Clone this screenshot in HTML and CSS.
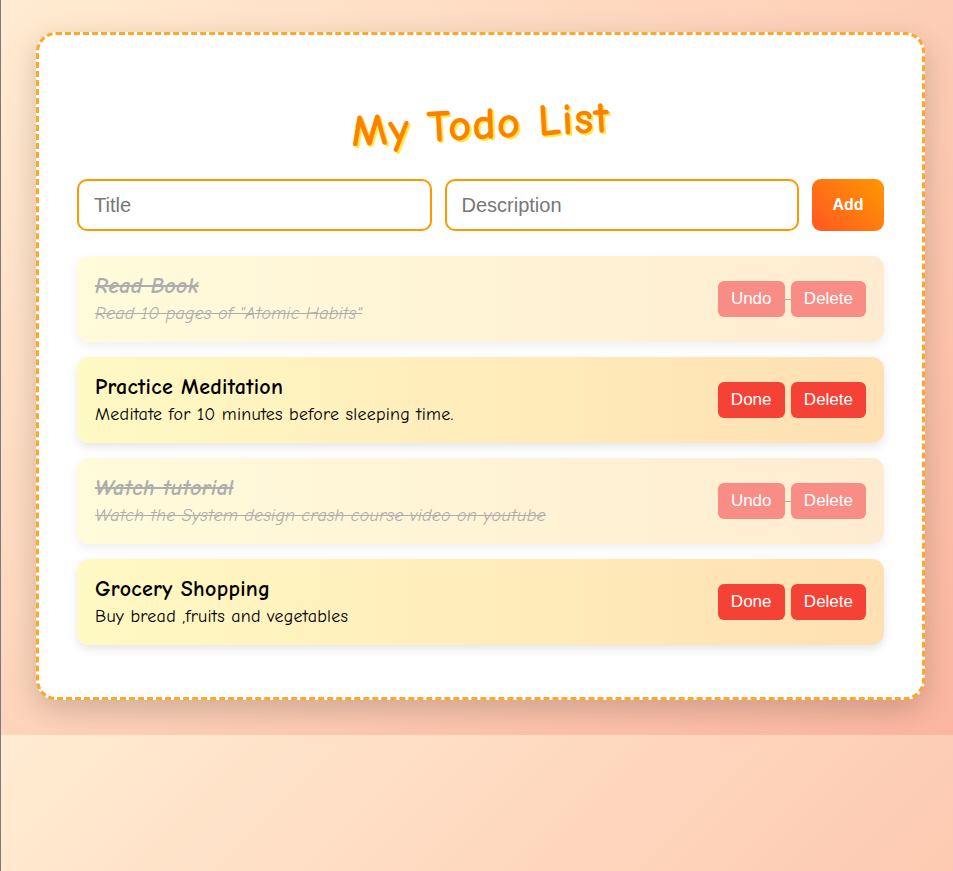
FILE: index.html
```html
<!DOCTYPE html>
<html lang="en">
<head>
<meta charset="utf-8">
<title>My Todo List</title>
<link rel="stylesheet" href="styles.css">
</head>
<body>
<div class="edge"></div>
<div class="app">
  <h1 class="heading">My Todo List</h1>
  <form class="add-row">
    <input class="field" type="text" placeholder="Title">
    <input class="field" type="text" placeholder="Description">
    <button class="add-btn" type="button">Add</button>
  </form>
  <div class="list">
    <div class="todo done">
      <div class="todo-text">
        <div class="todo-title">Read Book</div>
        <div class="todo-desc">Read 10 pages of "Atomic Habits"</div>
      </div>
      <div class="todo-actions"><button class="btn">Undo</button> <button class="btn">Delete</button></div>
    </div>
    <div class="todo">
      <div class="todo-text">
        <div class="todo-title">Practice Meditation</div>
        <div class="todo-desc">Meditate for 10 minutes before sleeping time.</div>
      </div>
      <div class="todo-actions"><button class="btn">Done</button> <button class="btn">Delete</button></div>
    </div>
    <div class="todo done">
      <div class="todo-text">
        <div class="todo-title">Watch tutorial</div>
        <div class="todo-desc">Watch the System design crash course video on youtube</div>
      </div>
      <div class="todo-actions"><button class="btn">Undo</button> <button class="btn">Delete</button></div>
    </div>
    <div class="todo">
      <div class="todo-text">
        <div class="todo-title">Grocery Shopping</div>
        <div class="todo-desc">Buy bread ,fruits and vegetables</div>
      </div>
      <div class="todo-actions"><button class="btn">Done</button> <button class="btn">Delete</button></div>
    </div>
  </div>
</div>
</body>
</html>
```
FILE: styles.css
```css
* { box-sizing: border-box; }

body {
  margin: 0;
  padding: 32px 0 35px 8px;
  background: linear-gradient(135deg, #ffecd2 0%, #fcb69f 100%);
  font-family: "Comic Sans MS", "Comic Neue", cursive;
}

.edge {
  position: fixed;
  left: 0;
  top: 0;
  bottom: 0;
  width: 1px;
  background: #7a7a7a;
}

.app {
  max-width: 889px;
  margin: 0 auto;
  background: #fff;
  border: 3px dashed #ffa726;
  border-radius: 20px;
  padding: 38px 38px 52px;
  box-shadow: 0 10px 30px rgba(0, 0, 0, 0.18);
}

.heading {
  margin: 26px 0 30px;
  text-align: center;
  font-size: 45px;
  line-height: 50px;
  letter-spacing: 1px;
  font-weight: bold;
  color: #fb8200;
  text-shadow: 2px 2px 0 #ffe93b;
  transform: rotate(-3.2deg);
}

.add-row {
  display: flex;
  gap: 13px;
  height: 52px;
  margin: 0 0 25px;
}

.field {
  flex: 1;
  min-width: 0;
  height: 52px;
  border: 2px solid #ff9800;
  border-radius: 10px;
  padding: 0 15px;
  font-family: "Liberation Sans", Arial, sans-serif;
  font-size: 20px;
  color: #333;
  background: #fff;
  outline: none;
}

.field::placeholder { color: #777; }

.add-btn {
  width: 72px;
  height: 52px;
  border: none;
  border-radius: 9px;
  background: linear-gradient(45deg, #ff5722, #ff9800);
  color: #fff;
  font-family: "Liberation Sans", Arial, sans-serif;
  font-weight: bold;
  font-size: 16px;
}

.list {
  display: flex;
  flex-direction: column;
  gap: 15px;
}

.todo {
  display: flex;
  align-items: center;
  justify-content: space-between;
  height: 86px;
  padding: 0 18px;
  border-radius: 12px;
  background: linear-gradient(90deg, #fff9c4, #ffe0b2);
  box-shadow: 0 4px 10px rgba(0, 0, 0, 0.1);
}

.todo-title {
  font-size: 22px;
  letter-spacing: 0.3px;
  font-weight: bold;
  line-height: 28px;
  color: #000;
}

.todo-desc {
  margin-top: 2px;
  font-size: 18px;
  letter-spacing: 0.25px;
  line-height: 24px;
  color: #000;
}

.todo.done {
  opacity: 0.6;
  text-decoration: line-through;
  font-style: italic;
  color: #777;
}

.todo.done .todo-title,
.todo.done .todo-desc { color: #777; }

.todo-actions {
  white-space: nowrap;
  font-size: 16px;
  word-spacing: 1px;
}

.btn {
  display: inline-block;
  height: 36px;
  padding: 0 13px;
  border: none;
  border-radius: 6px;
  background: #f44336;
  color: #fff;
  font-family: "Liberation Sans", Arial, sans-serif;
  font-size: 17px;
  font-style: normal;
  word-spacing: 0;
}
```
